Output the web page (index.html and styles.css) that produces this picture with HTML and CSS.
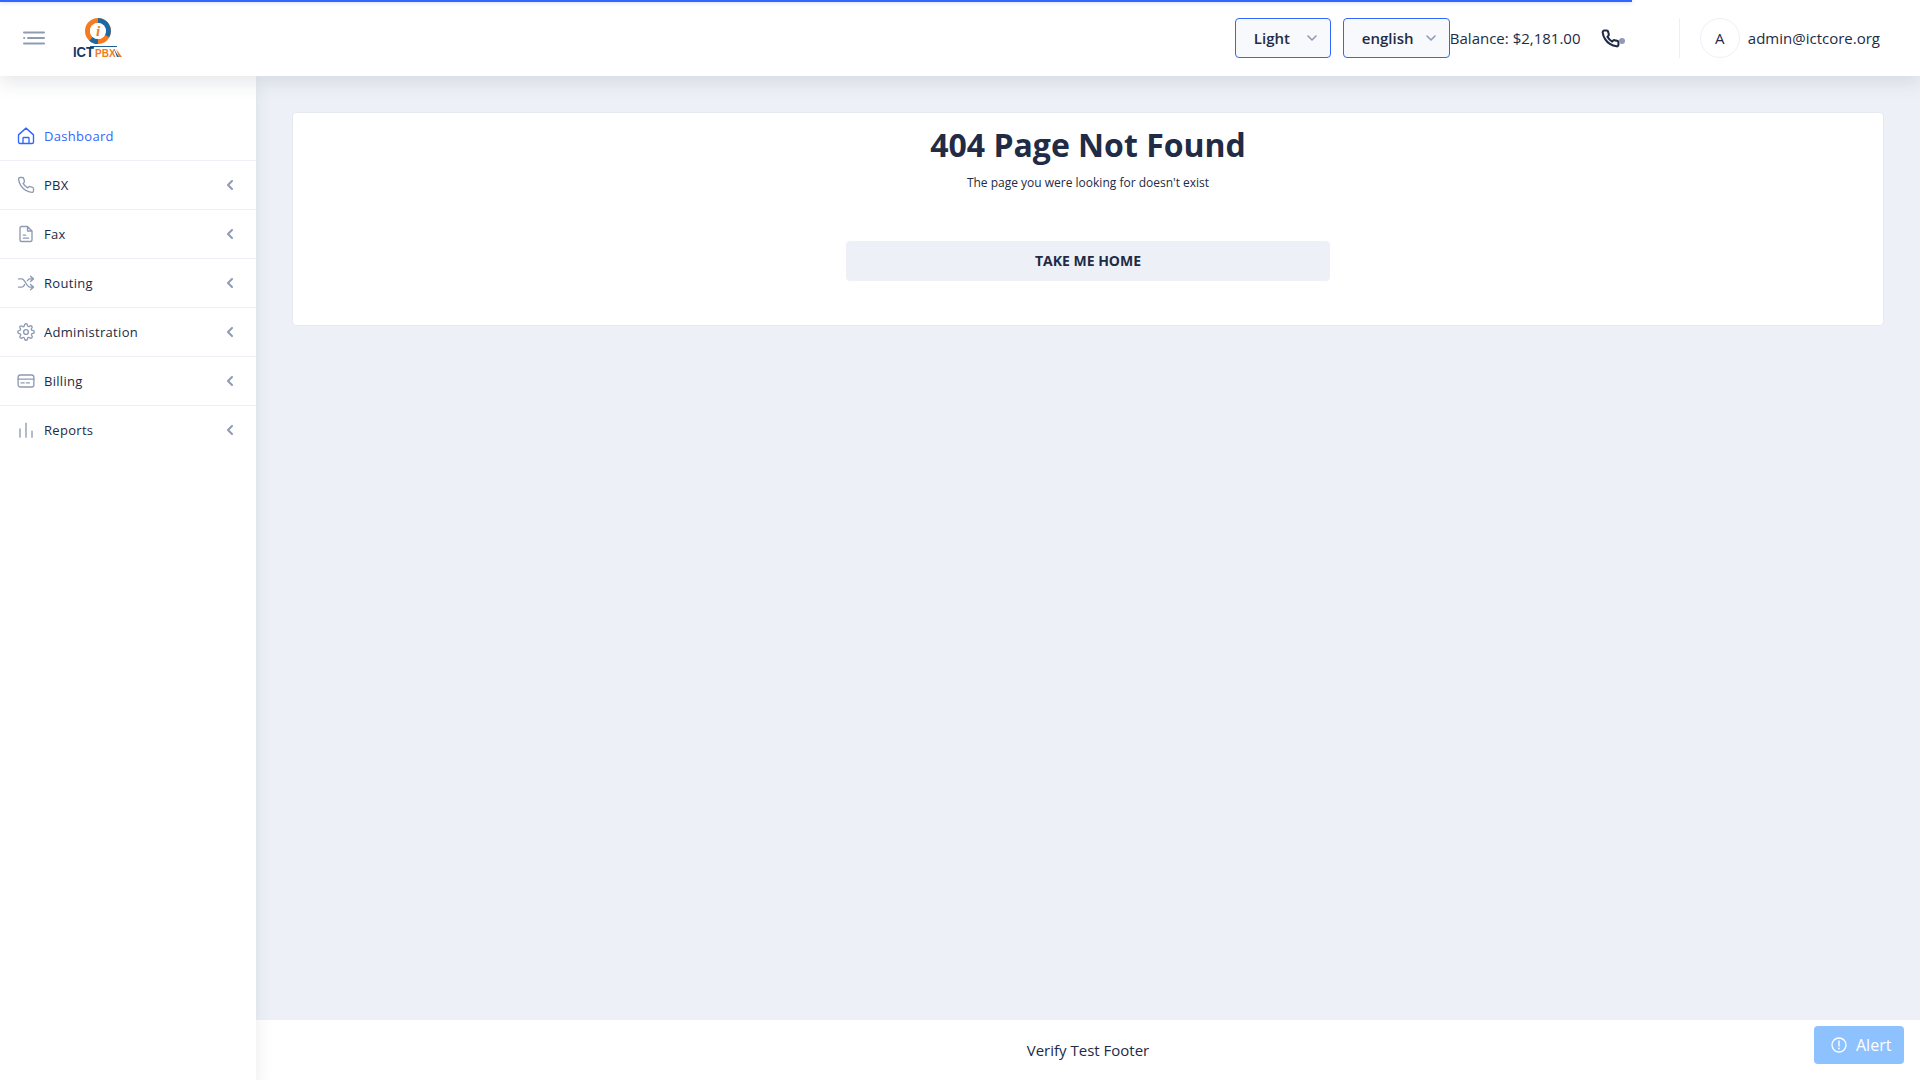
FILE: index.html
```html
<!DOCTYPE html>
<html lang="en">
<head>
<meta charset="utf-8">
<title>404 Page Not Found</title>
<link rel="stylesheet" href="styles.css">
</head>
<body>
<div class="progress"></div>
<header class="topbar">
  <button class="burger" aria-label="Menu">
    <svg viewBox="0 0 22 14" width="22" height="14"><path d="M1 1.500h20M5 7h16M1 12.500h20" stroke="#8f9bb3" stroke-width="2" stroke-linecap="round" fill="none"/><circle cx="1.200" cy="7" r="1.100" fill="#8f9bb3"/></svg>
  </button>
  <svg class="logo" viewBox="0 0 52 46" width="52" height="46" aria-label="ICT PBX">
    <circle cx="27" cy="16" r="10.500" fill="none" stroke="#f47b20" stroke-width="5"/>
    <path d="M27 5.500a10.500 10.500 0 0 1 9 15.500M27 26.500a10.500 10.500 0 0 1-7-2.700" fill="none" stroke="#1c6aa5" stroke-width="5"/>
    <circle cx="27" cy="16" r="8" fill="#fff"/>
    <text x="27" y="21" class="logo-i">i</text>
    <path d="M19 31.500h27" stroke="#1f5f96" stroke-width="1"/>
    <text x="2" y="42" class="logo-ict" textLength="21" lengthAdjust="spacingAndGlyphs">ICT</text>
    <text x="24" y="42" class="logo-pbx">PBX</text>
    <path d="M45 34l6 8h-3z" fill="#f47b20"/>
    <path d="M43 34l5 8h-2z" fill="#1f5f96"/>
  </svg>
  <div class="top-actions">
    <div class="select select-theme"><span>Light</span><svg class="caret" viewBox="0 0 10 6" width="10" height="6"><path d="M1 1l4 4 4-4" fill="none" stroke="#8f9bb3" stroke-width="1.600" stroke-linecap="round" stroke-linejoin="round"/></svg></div>
    <div class="select select-lang"><span>english</span><svg class="caret" viewBox="0 0 10 6" width="10" height="6"><path d="M1 1l4 4 4-4" fill="none" stroke="#8f9bb3" stroke-width="1.600" stroke-linecap="round" stroke-linejoin="round"/></svg></div>
    <span class="balance">Balance: $2,181.00</span>
    <span class="phone">
      <svg viewBox="0 0 24 24" width="19" height="19"><path d="M22 16.900v3a2 2 0 0 1-2.200 2 19.800 19.800 0 0 1-8.600-3.100 19.500 19.500 0 0 1-6-6A19.800 19.800 0 0 1 2.100 4.200 2 2 0 0 1 4.100 2h3a2 2 0 0 1 2 1.700c.1 1 .4 1.900.7 2.800a2 2 0 0 1-.5 2.100L8.100 9.900a16 16 0 0 0 6 6l1.300-1.300a2 2 0 0 1 2.100-.4c.900.3 1.800.6 2.800.7a2 2 0 0 1 1.700 2z" fill="none" stroke="#222b45" stroke-width="2.600" stroke-linejoin="round"/></svg>
      <i class="phone-dot"></i>
    </span>
    <div class="user">
      <span class="avatar">A</span>
      <span class="email">admin@ictcore.org</span>
    </div>
  </div>
</header>
<div class="layout">
  <nav class="sidebar">
    <a class="nav-item active">
      <svg class="nav-icon" viewBox="0 0 24 24"><path d="M2 10.500 12 1.500l10 9V20a2 2 0 0 1-2 2H4a2 2 0 0 1-2-2zM8 22v-7a1 1 0 0 1 1-1h6a1 1 0 0 1 1 1v7"/></svg>
      <span class="nav-label">Dashboard</span>
    </a>
    <a class="nav-item">
      <svg class="nav-icon" viewBox="0 0 24 24"><path d="M22 16.900v3a2 2 0 0 1-2.200 2 19.800 19.800 0 0 1-8.600-3.100 19.500 19.500 0 0 1-6-6A19.800 19.800 0 0 1 2.100 4.200 2 2 0 0 1 4.100 2h3a2 2 0 0 1 2 1.700c.1 1 .4 1.900.7 2.800a2 2 0 0 1-.5 2.100L8.100 9.900a16 16 0 0 0 6 6l1.300-1.300a2 2 0 0 1 2.100-.4c.900.3 1.800.6 2.800.7a2 2 0 0 1 1.700 2z"/></svg>
      <span class="nav-label">PBX</span>
      <svg class="nav-chevron" viewBox="0 0 6 10"><path d="M5 1 1 5l4 4"/></svg>
    </a>
    <a class="nav-item">
      <svg class="nav-icon" viewBox="0 0 24 24"><path d="M14 2H6a2 2 0 0 0-2 2v16a2 2 0 0 0 2 2h12a2 2 0 0 0 2-2V8zM14 2v6h6M8.500 13.500h3M8.500 17.500h7"/></svg>
      <span class="nav-label">Fax</span>
      <svg class="nav-chevron" viewBox="0 0 6 10"><path d="M5 1 1 5l4 4"/></svg>
    </a>
    <a class="nav-item">
      <svg class="nav-icon" viewBox="0 0 24 24"><path d="M18 3l4 3.500-4 3.500M18 14l4 3.500-4 3.500M2 6.500h4.500c4 0 6.500 11 10.500 11h5M2 17.500h4.500c1.500 0 2.700-1.500 3.700-3.400M13.800 9c.900-1.400 2-2.500 3.200-2.500h5"/></svg>
      <span class="nav-label">Routing</span>
      <svg class="nav-chevron" viewBox="0 0 6 10"><path d="M5 1 1 5l4 4"/></svg>
    </a>
    <a class="nav-item">
      <svg class="nav-icon" viewBox="0 0 24 24"><circle cx="12" cy="12" r="3.200"/><path d="M19.400 15a1.650 1.650 0 0 0 .33 1.820l.06.06a2 2 0 1 1-2.830 2.830l-.06-.06a1.650 1.650 0 0 0-2.800 1.170V21a2 2 0 0 1-4 0v-.09A1.650 1.650 0 0 0 7.300 19.700l-.06.06a2 2 0 1 1-2.830-2.830l.06-.06a1.650 1.650 0 0 0-1.170-2.800H3a2 2 0 0 1 0-4h.09A1.650 1.650 0 0 0 4.300 7.300l-.06-.06a2 2 0 1 1 2.830-2.830l.06.06a1.650 1.650 0 0 0 2.800-1.170V3a2 2 0 0 1 4 0v.09a1.650 1.650 0 0 0 2.800 1.170l.06-.06a2 2 0 1 1 2.830 2.830l-.06.06a1.650 1.650 0 0 0 1.170 2.800H21a2 2 0 0 1 0 4h-.09a1.650 1.650 0 0 0-1.510 1z"/></svg>
      <span class="nav-label">Administration</span>
      <svg class="nav-chevron" viewBox="0 0 6 10"><path d="M5 1 1 5l4 4"/></svg>
    </a>
    <a class="nav-item">
      <svg class="nav-icon" viewBox="0 0 24 24"><rect x="1.500" y="4" width="21" height="16" rx="3"/><path d="M1.500 9.500h21M5.500 14.500h4M12.500 14.500h4"/></svg>
      <span class="nav-label">Billing</span>
      <svg class="nav-chevron" viewBox="0 0 6 10"><path d="M5 1 1 5l4 4"/></svg>
    </a>
    <a class="nav-item">
      <svg class="nav-icon" viewBox="0 0 24 24"><path d="M4 21.500v-11M12 21.500V3M20 21.500v-8"/></svg>
      <span class="nav-label">Reports</span>
      <svg class="nav-chevron" viewBox="0 0 6 10"><path d="M5 1 1 5l4 4"/></svg>
    </a>
  </nav>
  <div class="content">
    <main class="main">
      <section class="card">
        <h1 class="title">404 Page Not Found</h1>
        <p class="subtitle">The page you were looking for doesn't exist</p>
        <button class="home-btn">TAKE ME HOME</button>
      </section>
    </main>
    <footer class="footer">Verify Test Footer</footer>
  </div>
</div>
<button class="alert-btn">
  <svg viewBox="0 0 16 16" width="16" height="16"><circle cx="8" cy="8" r="7" fill="none" stroke="#fff" stroke-width="1.300"/><path d="M8 4v5" stroke="#fff" stroke-width="1.400" stroke-linecap="round"/><circle cx="8" cy="11.500" r=".9" fill="#fff"/></svg>
  <span>Alert</span>
</button>
</body>
</html>
```
FILE: styles.css
```css
* { box-sizing: border-box; }
html, body { height: 100%; }
body {
  margin: 0;
  overflow: hidden;
  background: #edf1f7;
  color: #222b45;
  font-family: "Open Sans", "Liberation Sans", sans-serif;
}
.progress {
  position: fixed;
  top: 0;
  left: 0;
  width: 85%;
  height: 2px;
  background: #3366ff;
  box-shadow: 0 0 4px rgba(51, 102, 255, .4);
  z-index: 10;
}
.topbar {
  position: relative;
  z-index: 5;
  display: flex;
  align-items: center;
  height: 76px;
  padding: 0 40px 0 23px;
  background: #fff;
  box-shadow: 0 8px 16px 0 rgba(44, 51, 73, .1);
}
.burger {
  display: flex;
  padding: 0;
  border: 0;
  background: none;
}
.logo {
  margin-left: 26px;
}
.logo-i {
  font: italic 700 15px "Liberation Serif", serif;
  fill: #f47b20;
  text-anchor: middle;
}
.logo-ict {
  font: 700 15px "Liberation Sans", sans-serif;
  fill: #17395f;
}
.logo-pbx {
  font: 700 10px "Liberation Sans", sans-serif;
  fill: #f47b20;
}
.top-actions {
  display: flex;
  align-items: center;
  margin-left: auto;
}
.select {
  display: flex;
  align-items: center;
  justify-content: space-between;
  height: 40px;
  padding: 0 13px 0 18px;
  border: 1px solid #3366ff;
  border-radius: 4px;
  background: #f7f9fc;
  font-size: 15px;
  font-weight: 600;
}
.select-theme { width: 96px; margin-right: 12px; }
.select-lang { width: 107px; }
.balance {
  width: 151px;
  font-size: 15px;
  white-space: nowrap;
}
.phone {
  position: relative;
  display: flex;
  width: 26px;
}
.phone-dot {
  position: absolute;
  right: 2px;
  bottom: 4px;
  width: 6px;
  height: 6px;
  border-radius: 50%;
  background: #8f9bb3;
}
.user {
  display: flex;
  align-items: center;
  height: 40px;
  margin-left: 52px;
  padding-left: 20px;
  border-left: 1px solid #edf1f7;
}
.avatar {
  display: flex;
  align-items: center;
  justify-content: center;
  width: 40px;
  height: 40px;
  border: 1px solid #edf1f7;
  border-radius: 50%;
  font-size: 15px;
}
.email {
  margin-left: 8px;
  font-size: 15px;
}
.layout {
  display: flex;
  height: calc(100% - 76px);
}
.sidebar {
  position: relative;
  z-index: 2;
  flex: 0 0 256px;
  padding-top: 36px;
  background: #fff;
  box-shadow: 0 8px 16px 0 rgba(44, 51, 73, .1);
}
.nav-item {
  display: flex;
  align-items: center;
  height: 49px;
  padding: 0 23px 0 17px;
  border-bottom: 1px solid #edf1f7;
  font-size: 13px;
  font-weight: 500;
  letter-spacing: .3px;
  color: #222b45;
}
.nav-item:last-child { border-bottom-color: transparent; }
.nav-item.active { color: #3366ff; }
.nav-icon {
  flex: none;
  width: 18px;
  height: 18px;
  margin-right: 9px;
  fill: none;
  stroke: #8f9bb3;
  stroke-width: 1.800;
  stroke-linecap: round;
  stroke-linejoin: round;
}
.active .nav-icon { stroke: #3366ff; }
.nav-label { flex: 1; }
.nav-chevron {
  flex: none;
  width: 6px;
  height: 10px;
  fill: none;
  stroke: #8f9bb3;
  stroke-width: 2;
  stroke-linecap: round;
  stroke-linejoin: round;
}
.content {
  flex: 1;
  display: flex;
  flex-direction: column;
  min-width: 0;
}
.main {
  flex: 1;
  padding: 36px;
}
.card {
  display: flex;
  flex-direction: column;
  align-items: center;
  height: 214px;
  padding-top: 10px;
  border: 1px solid #e4e9f2;
  border-radius: 4px;
  background: #fff;
}
.title {
  margin: 0;
  font-size: 32px;
  line-height: 44px;
  font-weight: 700;
  color: #222b45;
}
.subtitle {
  margin: 7px 0 0;
  font-size: 12px;
  line-height: 17px;
}
.home-btn {
  width: 484px;
  height: 40px;
  margin-top: 50px;
  padding: 0 0 2px;
  border: 0;
  border-radius: 4px;
  background: #edf1f7;
  color: #222b45;
  font: 700 14px "Open Sans", sans-serif;
}
.footer {
  display: flex;
  align-items: center;
  justify-content: center;
  height: 60px;
  background: #fff;
  font-size: 15px;
}
.alert-btn {
  position: fixed;
  right: 16px;
  bottom: 16px;
  display: flex;
  align-items: center;
  gap: 9px;
  width: 90px;
  height: 38px;
  padding: 0 0 0 17px;
  border: 0;
  border-radius: 4px;
  background: #8dc2ff;
  color: #fff;
  font: 400 16px "Open Sans", sans-serif;
}
```
